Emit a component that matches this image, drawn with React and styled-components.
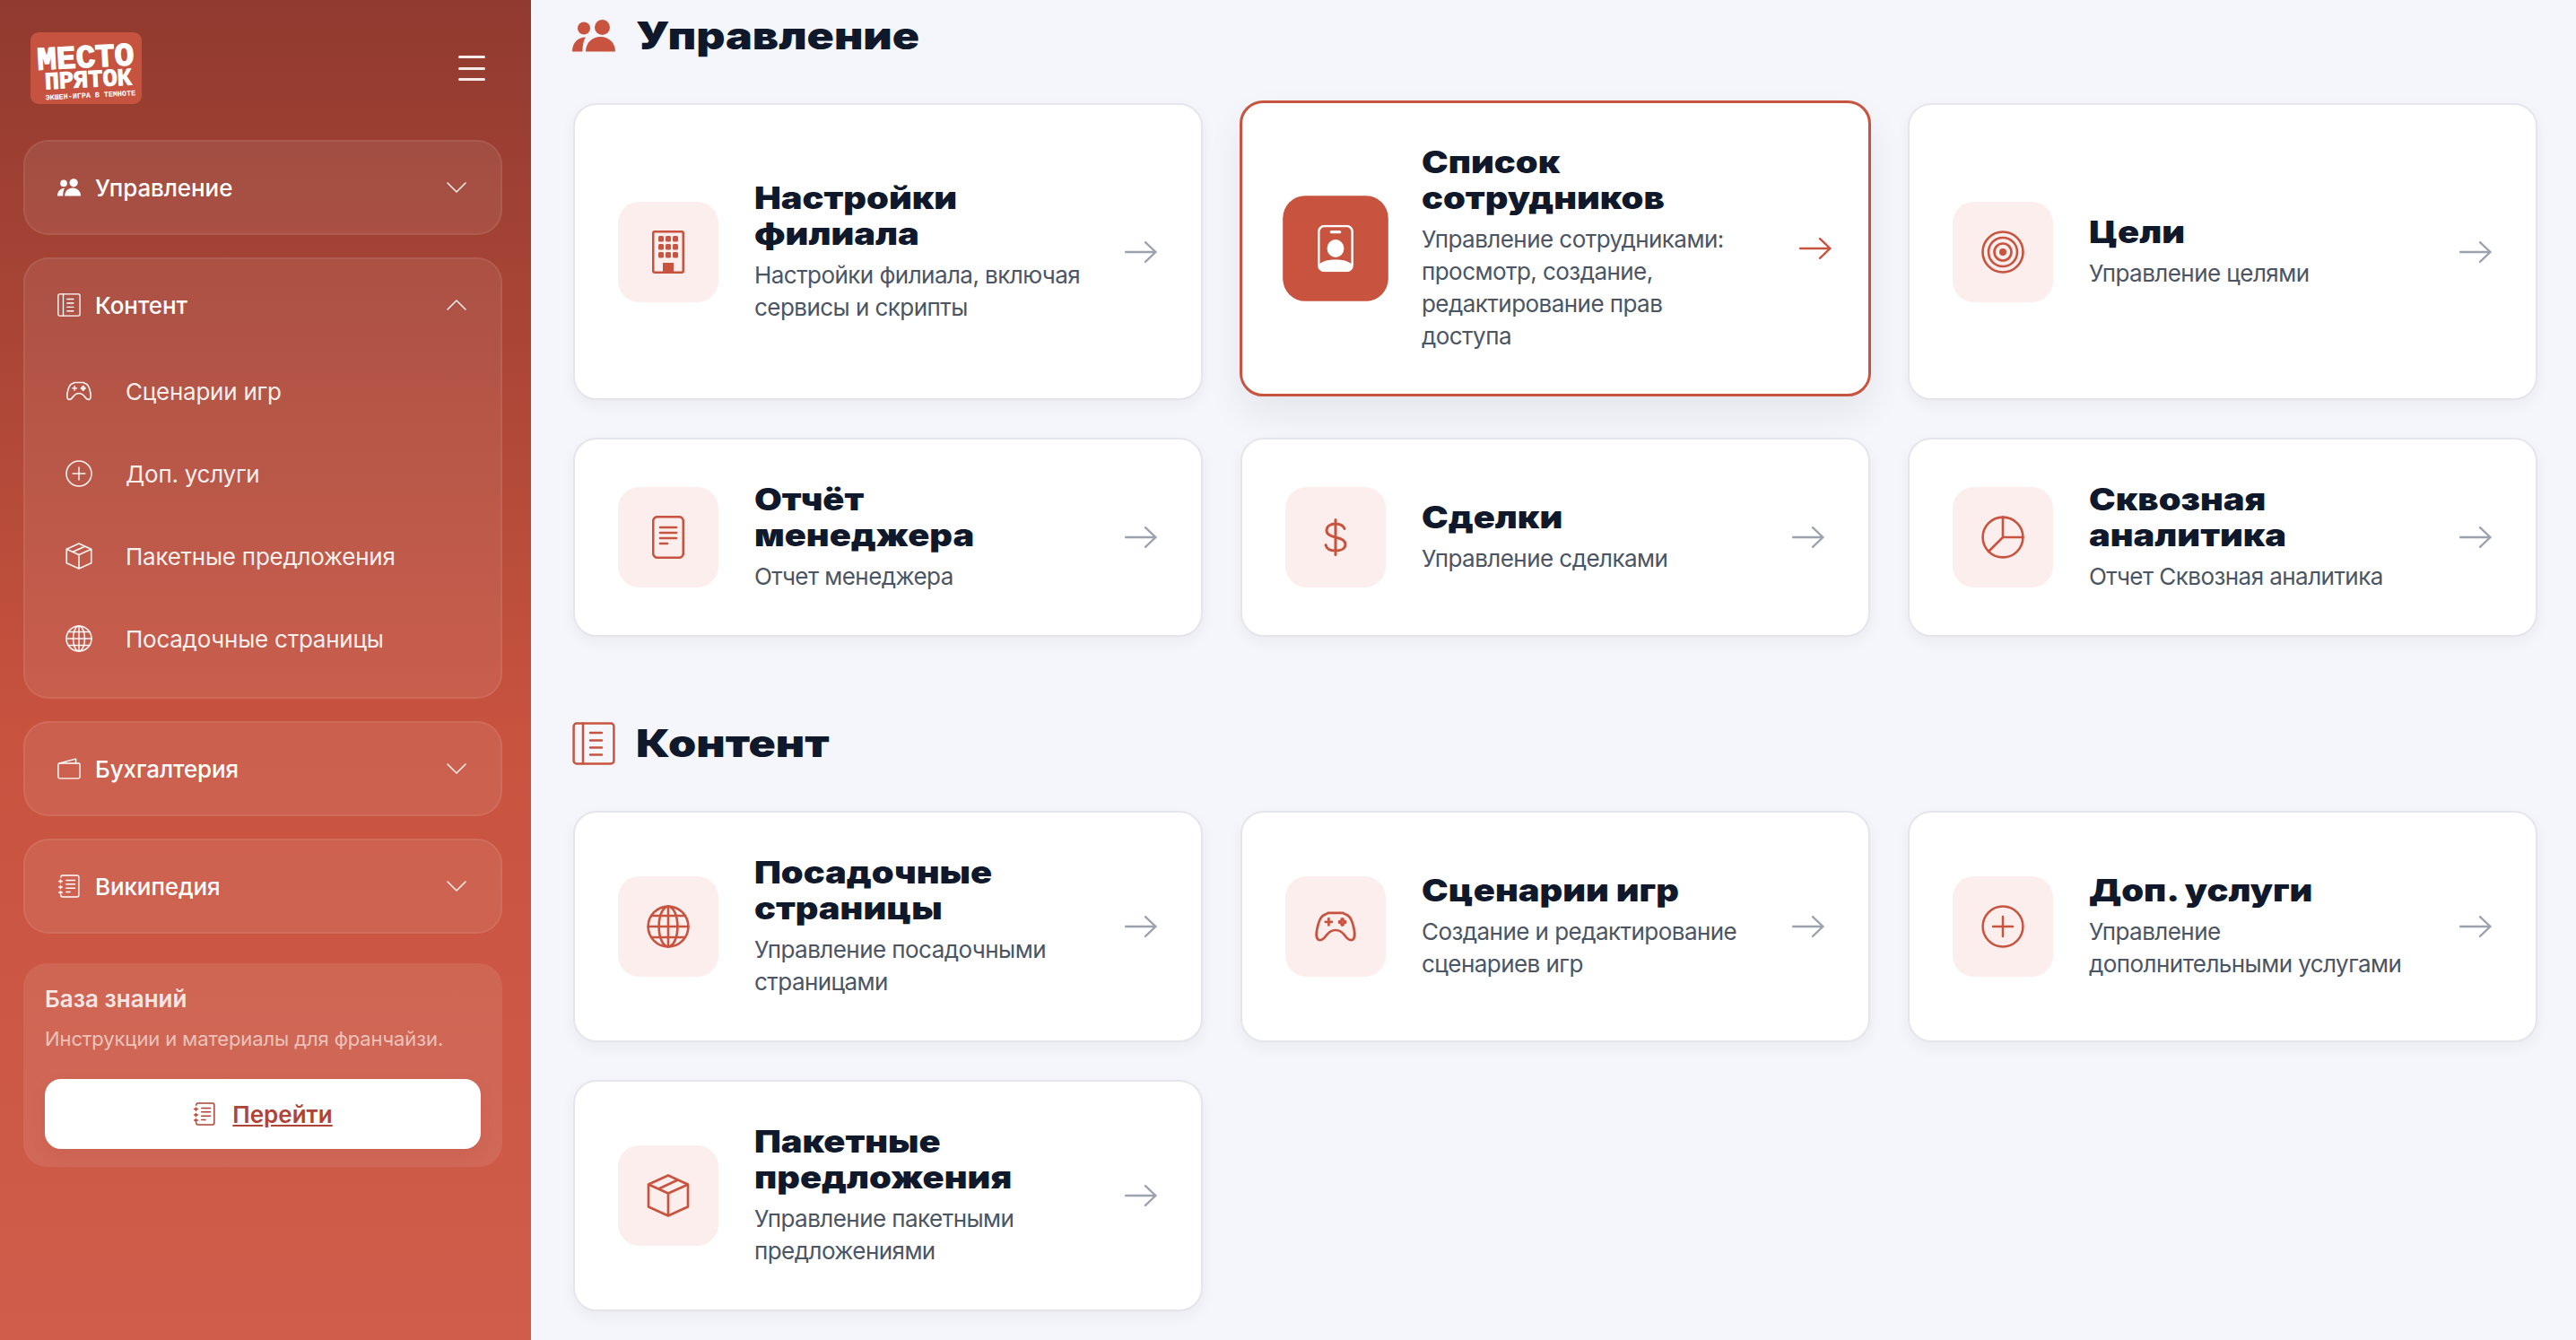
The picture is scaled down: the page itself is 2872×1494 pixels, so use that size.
import styled, { createGlobalStyle } from 'styled-components';

const accent = '#c8533f';

const GlobalStyle = createGlobalStyle`
	html, body {
		margin: 0;
		height: 100%;
		overflow: hidden;
		background: #f5f6fb;
		font-family: Inter, 'Noto Sans', sans-serif;
	}
	* {
		box-sizing: border-box;
	}
`;

const Layout = styled.div`
	display: flex;
	width: 2872px;
	height: 1494px;
	overflow: hidden;
`;

const Sidebar = styled.aside`
	flex: 0 0 592px;
	display: flex;
	flex-direction: column;
	padding: 36px 32px 0 26px;
	background: linear-gradient(180deg, #913a2f 0%, #c8533f 55%, #d05c4b 100%);
`;

const Brand = styled.div`
	display: flex;
	align-items: center;
	justify-content: space-between;
	height: 80px;
	margin-bottom: 40px;
	padding-left: 8px;
`;

const Burger = styled.button`
	display: flex;
	flex-direction: column;
	gap: 9.5px;
	width: 30px;
	margin-right: 19px;
	padding: 0;
	border: 0;
	background: none;

	span {
		height: 3px;
		background: #fff;
		border-radius: 2px;
		opacity: 0.9;
	}
`;

const NavGroup = styled.section`
	margin-bottom: 25px;
	background: rgba(255, 255, 255, 0.08);
	border: 2px solid rgba(255, 255, 255, 0.07);
	border-radius: 28px;
`;

const NavHeader = styled.div`
	display: flex;
	align-items: center;
	gap: 16px;
	height: 102px;
	padding: 0 38px 0 36px;
	color: #fff;
	font-size: 26px;
	font-weight: 500;
	letter-spacing: -0.1px;

	span {
		flex: 1;
	}
`;

const NavList = styled.ul`
	margin: -1px 0 0;
	padding: 0 0 19px 45px;
	list-style: none;
`;

const NavItem = styled.li`
	display: flex;
	align-items: center;
	gap: 37px;
	height: 92px;
	color: rgba(255, 255, 255, 0.92);
	font-size: 26px;
	font-weight: 400;
	letter-spacing: -0.25px;
`;

const KnowledgeCard = styled.div`
	margin-top: 8px;
	padding: 24px 24px 20px;
	background: rgba(255, 255, 255, 0.09);
	border-radius: 26px;
`;

const KnowledgeTitle = styled.div`
	color: rgba(255, 255, 255, 0.85);
	font-size: 26px;
	font-weight: 600;
	line-height: 32px;
`;

const KnowledgeText = styled.p`
	margin: 12px 0 29px;
	color: rgba(255, 255, 255, 0.62);
	font-size: 22px;
	line-height: 32px;
	letter-spacing: -0.1px;
	white-space: nowrap;
`;

const GoButton = styled.a`
	display: flex;
	align-items: center;
	justify-content: center;
	gap: 18px;
	height: 78px;
	color: #ad4435;
	font-size: 26px;
	font-weight: 600;
	text-decoration: underline;
	background: #fff;
	border-radius: 18px;
	box-shadow: 0 6px 16px rgba(150, 50, 40, 0.12);
`;

const Main = styled.main`
	flex: 1;
	padding: 14px 43px 0 47px;
	overflow: hidden;
`;

const Section = styled.section`
	margin-bottom: 93px;
`;

const SectionTitle = styled.h2`
	display: flex;
	align-items: center;
	gap: 23px;
	height: 52px;
	margin: 0 0 49px -1px;
	color: #10182b;
	font-size: 42px;
	font-weight: 900;
	line-height: 52px;
`;

const SectionLabel = styled.span`
	display: inline-block;
	transform: scaleX(1.19);
	transform-origin: left center;
`;

const TitleIcon = styled.span`
	display: flex;
	color: ${accent};
`;

const CardGrid = styled.div`
	display: grid;
	grid-template-columns: repeat(3, 702px);
	gap: 42px;
`;

const Card = styled.article`
	display: flex;
	align-items: center;
	padding: ${(props) => (props.$active ? '46px 48px' : '47px 48px')};
	margin: ${(props) => (props.$active ? '-3px -1px 4px' : '0')};
	background: #fff;
	border: ${(props) => (props.$active ? `3px solid ${accent}` : '2px solid #e4e6ec')};
	border-radius: 26px;
	box-shadow: ${(props) =>
		props.$active ? '0 20px 40px rgba(20, 30, 60, 0.07)' : '0 6px 16px rgba(20, 30, 60, 0.05)'};
`;

const Tile = styled.div`
	flex: 0 0 112px;
	display: flex;
	align-items: center;
	justify-content: center;
	height: 112px;
	margin-right: 40px;
	color: ${(props) => (props.$active ? '#fff' : accent)};
	background: ${(props) => (props.$active ? accent : '#fbeeed')};
	border-radius: 24px;
	transform: ${(props) => (props.$active ? 'scale(1.05)' : 'none')};
`;

const CardBody = styled.div`
	flex: 1;
	min-width: 0;
`;

const CardTitle = styled.h3`
	width: calc(100% / 1.17);
	margin: 0 0 8px;
	color: #10182b;
	font-size: 34px;
	font-weight: 900;
	line-height: 40px;
	transform: scaleX(1.17);
	transform-origin: left center;
`;

const CardText = styled.p`
	margin: 0;
	color: #4b5563;
	font-size: 26px;
	line-height: 36px;
	letter-spacing: -0.55px;
`;

const ArrowWrap = styled.div`
	flex: 0 0 36px;
	display: flex;
	margin: 0 1px 0 40px;
	color: ${(props) => (props.$active ? accent : '#9ca3af')};
	transform: ${(props) => (props.$active ? 'translate(8px, 0)' : 'none')};
`;

const Svg = ({ size = 48, height, children, fill = 'none', sw = 1.3 }) => (
	<svg
		width={size}
		height={height || size}
		viewBox="0 0 24 24"
		fill={fill}
		stroke="currentColor"
		strokeWidth={sw}
		strokeLinecap="round"
		strokeLinejoin="round"
		style={{ flexShrink: 0 }}
	>
		{children}
	</svg>
);

const UsersIcon = ({ width = 48, height = 36 }) => (
	<svg width={width} height={height} viewBox="0 0 48 36" fill="currentColor" style={{ flexShrink: 0 }}>
		<ellipse cx="13" cy="9.5" rx="7" ry="7" />
		<ellipse cx="33.5" cy="8.5" rx="8.5" ry="8.5" />
		<path d="M0 35.5C0 26 6 19.5 15 19.5 12.5 23 11.5 29 11.5 35.5Z" />
		<path d="M15 35.5C15 26 22 19 31.5 19S48 26 48 35.5Z" />
	</svg>
);

const BookIcon = ({ size }) => (
	<Svg size={size} sw={1.25}>
		<rect x="0.8" y="0.8" width="22.4" height="22.4" rx="1.6" />
		<path d="M6 0.8V23.2M10 6h6.5M10 10.2h6.5M10 14.2h6.5M10 18.2h6.5" />
	</Svg>
);

const BuildingIcon = () => (
	<svg width="36" height="48" viewBox="0 0 36 48" fill="currentColor">
		<rect x="1.2" y="1.2" width="33.6" height="45.6" rx="2" fill="none" stroke="currentColor" strokeWidth="2.6" />
		{[7, 15, 23].map((x) =>
			[6, 15, 24].map((y) => <rect key={`${x}-${y}`} x={x} y={y} width="6" height="6.5" rx="1.5" />),
		)}
		<rect x="12" y="36" width="12" height="11" />
	</svg>
);

const BadgeIcon = () => (
	<svg width="38" height="50" viewBox="0 0 38 50">
		<rect x="1.2" y="1.2" width="35.6" height="47.6" rx="6" fill="none" stroke="currentColor" strokeWidth="2.4" />
		<rect x="13" y="6" width="12" height="3" rx="1.5" fill="currentColor" />
		<ellipse cx="19" cy="25" rx="9" ry="9.5" fill="currentColor" />
		<path d="M1.5 42C6 38 12 37 19 37S32 38 36.5 42V44A5 5 0 0 1 31 49H7A5 5 0 0 1 1.5 44Z" fill="currentColor" />
	</svg>
);

const TargetIcon = () => (
	<svg width="48" height="48" viewBox="0 0 48 48" fill="none" stroke="currentColor" strokeWidth="2.6">
		<circle cx="24" cy="24" r="22.5" />
		<circle cx="24" cy="24" r="16" />
		<circle cx="24" cy="24" r="9.5" />
		<circle cx="24" cy="24" r="4" fill="currentColor" stroke="none" />
	</svg>
);

const DocIcon = () => (
	<svg width="36" height="48" viewBox="0 0 36 48" fill="none" stroke="currentColor" strokeWidth="2.6" strokeLinecap="round">
		<rect x="1.2" y="1.2" width="33.6" height="45.6" rx="5" />
		<path d="M9 13H27M9 19H27M9 25H27M9 31H17" />
	</svg>
);

const DollarIcon = () => (
	<Svg sw={1.5}>
		<path d="M17 7.2C16.2 5.4 14.5 4.5 12 4.5 9 4.5 7 6 7 8.3 7 10.6 9 11.4 12 12 15 12.6 17.5 13.5 17.5 16 17.5 18.3 15 19.5 12 19.5 9 19.5 7 18.3 6.5 16.3M12 2.2V21.8" />
	</Svg>
);

const PieIcon = () => (
	<Svg sw={1.3}>
		<circle cx="12" cy="12" r="11.2" />
		<path d="M12 0.8V12H23.2M12 12L4 20" />
	</Svg>
);

const GlobeIcon = ({ size }) => (
	<Svg size={size} sw={1.3}>
		<circle cx="12" cy="12" r="11.2" />
		<ellipse cx="12" cy="12" rx="5.2" ry="11.2" />
		<path d="M12 0.8V23.2M0.8 12H23.2M2.6 6H21.4M2.6 18H21.4" />
	</Svg>
);

const GamepadIcon = ({ size }) => (
	<Svg size={size} sw={1.35}>
		<path d="M6.5 5.2L8 4.4H16L17.5 5.2C19.5 5.7 20.6 7 21.6 10.6 22.7 14.6 23.4 18 21.5 19.4 20 20 18.5 19 17 16.8 15.5 14.8 14 14 12 14S8.5 14.8 7 16.8C5.5 19 4 20 2.5 19.4 .6 18 1.3 14.6 2.4 10.6 3.4 7 4.5 5.7 6.5 5.2Z" />
		<path d="M8.2 7.6V11.2M6.4 9.4H10" />
		<circle cx="15.8" cy="8.2" r=".5" fill="currentColor" />
		<circle cx="15.8" cy="10.8" r=".5" fill="currentColor" />
		<circle cx="14.5" cy="9.5" r=".5" fill="currentColor" />
		<circle cx="17.1" cy="9.5" r=".5" fill="currentColor" />
	</Svg>
);

const PlusIcon = ({ size }) => (
	<Svg size={size} sw={1.25}>
		<circle cx="12" cy="12" r="11.2" />
		<path d="M12 6.5V17.5M6.5 12H17.5" />
	</Svg>
);

const BoxIcon = ({ size }) => (
	<Svg size={size} sw={1.35}>
		<path d="M12 0.8L23 5.8V18.2L12 23.2 1 18.2V5.8ZM1 5.8L12 10.8 23 5.8M12 10.8V23.2M6.6 8.2L17.4 3.3" />
	</Svg>
);

const WalletIcon = ({ size }) => (
	<Svg size={size} sw={1.3}>
		<rect x="0.8" y="6.5" width="22.4" height="15.5" rx="1.6" />
		<path d="M2 6.5L19 2V6.5" />
	</Svg>
);

const NotebookIcon = ({ size }) => (
	<Svg size={size} sw={1.4}>
		<path d="M3.5 3V2.5A1.7 1.7 0 0 1 5.2 1H20.3A1.7 1.7 0 0 1 22 2.7V21.3A1.7 1.7 0 0 1 20.3 23H5.2A1.7 1.7 0 0 1 3.5 21.3V21" />
		<path d="M9 6H18M9 10H18M9 14H18M9 18H13M1.5 7H5M3.2 5.5V8.5M1.5 13H5M3.2 11.5V14.5M1.5 18.5H5M3.2 17V20" />
	</Svg>
);

const Chevron = ({ up }) => (
	<svg width="22" height="12" viewBox="0 0 22 12" fill="none" stroke="#fff" strokeWidth="1.6" strokeLinecap="round" strokeLinejoin="round" opacity="0.9">
		<path d={up ? 'M1 11L11 1 21 11' : 'M1 1L11 11 21 1'} />
	</svg>
);

const Arrow = () => (
	<svg width="36" height="24" viewBox="0 0 36 24" fill="none" stroke="currentColor" strokeWidth="2.4" strokeLinecap="round" strokeLinejoin="round">
		<path d="M1.2 12H34.5M23 1.2L34.5 12 23 22.8" />
	</svg>
);

const Logo = () => (
	<svg width="124" height="80" viewBox="0 0 124 80">
		<rect width="124" height="80" rx="9" fill="#c5533f" />
		<g transform="rotate(-3 62 40)" fontFamily="'Liberation Mono', monospace" fontWeight="700" fill="#fff">
			<text x="8" y="39" fontSize="36" stroke="#fff" strokeWidth="1.4">
				МЕСТО
			</text>
			<text x="15" y="61" fontSize="27" stroke="#fff" strokeWidth="1">
				ПРЯТОК
			</text>
			<text x="15" y="73" fontSize="8.4">
				ЭКШЕН-ИГРА В ТЕМНОТЕ
			</text>
		</g>
	</svg>
);

const managementCards = [
	{ title: 'Настройки филиала', text: 'Настройки филиала, включая сервисы и скрипты', icon: <BuildingIcon /> },
	{
		title: 'Список сотрудников',
		text: 'Управление сотрудниками: просмотр, создание, редактирование прав доступа',
		icon: <BadgeIcon />,
		active: true,
	},
	{ title: 'Цели', text: 'Управление целями', icon: <TargetIcon /> },
	{ title: 'Отчёт менеджера', text: 'Отчет менеджера', icon: <DocIcon /> },
	{ title: 'Сделки', text: 'Управление сделками', icon: <DollarIcon /> },
	{ title: 'Сквозная аналитика', text: 'Отчет Сквозная аналитика', icon: <PieIcon /> },
];

const contentCards = [
	{ title: 'Посадочные страницы', text: 'Управление посадочными страницами', icon: <GlobeIcon size={48} /> },
	{ title: 'Сценарии игр', text: 'Создание и редактирование сценариев игр', icon: <GamepadIcon size={48} /> },
	{ title: 'Доп. услуги', text: 'Управление дополнительными услугами', icon: <PlusIcon size={48} /> },
	{ title: 'Пакетные предложения', text: 'Управление пакетными предложениями', icon: <BoxIcon size={48} /> },
];

const contentLinks = [
	{ label: 'Сценарии игр', icon: <GamepadIcon size={30} /> },
	{ label: 'Доп. услуги', icon: <PlusIcon size={30} /> },
	{ label: 'Пакетные предложения', icon: <BoxIcon size={30} /> },
	{ label: 'Посадочные страницы', icon: <GlobeIcon size={30} /> },
];

const CardList = ({ cards }) => (
	<CardGrid>
		{cards.map((card) => (
			<Card key={card.title} $active={card.active}>
				<Tile $active={card.active}>{card.icon}</Tile>
				<CardBody>
					<CardTitle>{card.title}</CardTitle>
					<CardText>{card.text}</CardText>
				</CardBody>
				<ArrowWrap $active={card.active}>
					<Arrow />
				</ArrowWrap>
			</Card>
		))}
	</CardGrid>
);

const App = () => {
	return (
		<Layout>
			<GlobalStyle />
			<Sidebar>
				<Brand>
					<Logo />
					<Burger aria-label="Меню">
						<span />
						<span />
						<span />
					</Burger>
				</Brand>

				<NavGroup>
					<NavHeader>
						<UsersIcon width={26} height={20} />
						<span>Управление</span>
						<Chevron />
					</NavHeader>
				</NavGroup>

				<NavGroup>
					<NavHeader>
						<BookIcon size={26} />
						<span>Контент</span>
						<Chevron up />
					</NavHeader>
					<NavList>
						{contentLinks.map((link) => (
							<NavItem key={link.label}>
								{link.icon}
								{link.label}
							</NavItem>
						))}
					</NavList>
				</NavGroup>

				<NavGroup>
					<NavHeader>
						<WalletIcon size={26} />
						<span>Бухгалтерия</span>
						<Chevron />
					</NavHeader>
				</NavGroup>

				<NavGroup>
					<NavHeader>
						<NotebookIcon size={26} />
						<span>Википедия</span>
						<Chevron />
					</NavHeader>
				</NavGroup>

				<KnowledgeCard>
					<KnowledgeTitle>База знаний</KnowledgeTitle>
					<KnowledgeText>Инструкции и материалы для франчайзи.</KnowledgeText>
					<GoButton>
						<NotebookIcon size={26} />
						Перейти
					</GoButton>
				</KnowledgeCard>
			</Sidebar>

			<Main>
				<Section>
					<SectionTitle>
						<TitleIcon>
							<UsersIcon />
						</TitleIcon>
						<SectionLabel>Управление</SectionLabel>
					</SectionTitle>
					<CardList cards={managementCards} />
				</Section>
				<Section>
					<SectionTitle>
						<TitleIcon>
							<BookIcon size={48} />
						</TitleIcon>
						<SectionLabel>Контент</SectionLabel>
					</SectionTitle>
					<CardList cards={contentCards} />
				</Section>
			</Main>
		</Layout>
	);
};

export default App;
